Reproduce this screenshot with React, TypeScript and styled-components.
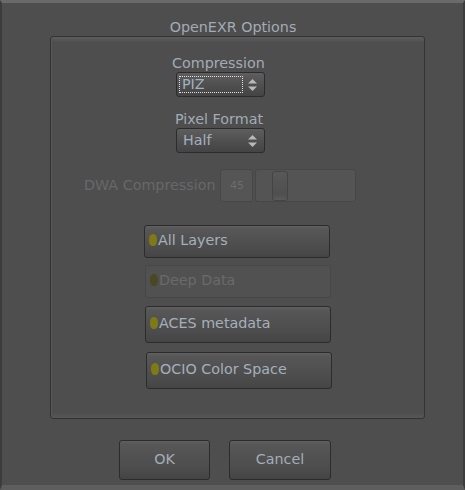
import React from "react";
import styled, { createGlobalStyle } from "styled-components";

const Global = createGlobalStyle`
  html, body { margin: 0; padding: 0; background: #4e4e4e; }
  body { font-family: "DejaVu Sans", "Liberation Sans", sans-serif; }
`;

const Window = styled.div`
  box-sizing: border-box;
  width: 465px;
  height: 490px;
  background: #4e4e4e;
  border-top: 3px solid #6a6a6a;
  border-left: 2px solid #3c3c3c;
  border-right: 2px solid #3c3c3c;
  border-bottom: 5px solid #5e5e5e;
  display: flex;
  flex-direction: column;
  align-items: flex-start;
`;

const Title = styled.div`
  align-self: stretch;
  text-align: center;
  color: #a3abb5;
  font-size: 14.3px;
  line-height: 17px;
  margin-top: 16px;
  padding-left: 1px;
`;

const Group = styled.div`
  box-sizing: border-box;
  margin-left: 48px;
  width: 375px;
  height: 383px;
  border: 1px solid #333;
  border-radius: 3px;
  background: linear-gradient(#5d5d5d 0px, #555 3px, #4e4e4e 5px, #4e4e4e calc(100% - 6px), #565656 100%);
  box-shadow: inset 1px 0 0 #575757;
  display: flex;
  flex-direction: column;
  align-items: flex-start;
  padding-top: 18px;
`;

const Label = styled.div<{ $left: number; $dim?: boolean; $top?: number }>`
  margin-left: ${(p) => p.$left}px;
  margin-top: ${(p) => p.$top ?? 0}px;
  color: ${(p) => (p.$dim ? "#686868" : "#a3abb5")};
  font-size: 14.3px;
  line-height: 17px;
  text-align: center;
`;

const Choice = styled.div<{ $left: number }>`
  box-sizing: border-box;
  margin-left: ${(p) => p.$left}px;
  width: 89px;
  height: 25px;
  border: 1px solid #2c2c2c;
  border-radius: 3px;
  background: linear-gradient(#5e5e5e, #4d4d4d 60%, #444);
  display: flex;
  align-items: center;
  padding-left: 3px;
  padding-right: 7px;
  color: #a3b0be;
  font-size: 14.3px;
`;

const ChoiceText = styled.span<{ $focus?: boolean }>`
  flex: 1;
  box-sizing: border-box;
  height: 15px;
  line-height: 14px;
  padding-left: ${(p) => (p.$focus ? 2 : 3)}px;
  outline: ${(p) => (p.$focus ? "1px dotted #e0e0e0" : "none")};
  margin-right: 6px;
`;

const Arrows = () => (
  <svg width="9" height="12" viewBox="0 0 9 12">
    <path d="M4.5 0 L9 4.5 L0 4.5 Z" fill="#b8b8b8" />
    <path d="M4.5 12 L9 7.5 L0 7.5 Z" fill="#b8b8b8" />
  </svg>
);

const DwaRow = styled.div`
  margin-top: 16px;
  margin-left: 33px;
  height: 33px;
  display: flex;
  align-items: center;
`;

const ValueBox = styled.div`
  box-sizing: border-box;
  width: 33px;
  height: 33px;
  margin-left: 5px;
  border: 1px solid #474747;
  border-radius: 3px;
  background: #555;
  color: #6c6c6c;
  font-size: 11px;
  display: flex;
  align-items: center;
  justify-content: center;
`;

const SliderTrack = styled.div`
  box-sizing: border-box;
  position: relative;
  width: 101px;
  height: 33px;
  margin-left: 2px;
  border: 1px solid #474747;
  border-radius: 3px;
  background: #545454;
`;

const SliderKnob = styled.div`
  box-sizing: border-box;
  position: absolute;
  left: 16px;
  top: 1px;
  width: 16px;
  height: 30px;
  border: 1px solid #444;
  border-radius: 3px;
  background: linear-gradient(#585858, #4f4f4f 80%, #5a5a5a);
`;

const Check = styled.div<{ $left: number; $top: number; $h: number; $dim?: boolean }>`
  box-sizing: border-box;
  margin-left: ${(p) => p.$left}px;
  margin-top: ${(p) => p.$top}px;
  width: 186px;
  height: ${(p) => p.$h}px;
  border: 1px solid ${(p) => (p.$dim ? "#474747" : "#2c2c2c")};
  border-radius: 3px;
  background: ${(p) =>
    p.$dim
      ? "#515151"
      : "linear-gradient(#606060 0px, #575757 3px, #4c4c4c 70%, #454545)"};
  display: flex;
  align-items: center;
  padding-left: 4px;
  padding-bottom: 3px;
  color: ${(p) => (p.$dim ? "#6a6a6a" : "#a5b0bc")};
  font-size: 14.3px;
  gap: 1px;
`;

const Dot = styled.span<{ $dim?: boolean }>`
  width: 8px;
  height: 12px;
  border-radius: 45%;
  background: ${(p) => (p.$dim ? "#4a4822" : "#7f7a16")};
  flex: none;
`;

const ButtonRow = styled.div`
  display: flex;
  margin-top: 21px;
  margin-left: 117px;
  gap: 19px;
`;

const Button = styled.div<{ $w: number }>`
  box-sizing: border-box;
  width: ${(p) => p.$w}px;
  height: 40px;
  border: 1px solid #2c2c2c;
  border-radius: 3px;
  background: linear-gradient(#606060 0px, #575757 3px, #4c4c4c 75%, #444);
  color: #a3adb8;
  font-size: 14.3px;
  display: flex;
  align-items: center;
  justify-content: center;
  padding-bottom: 2px;
`;

export default function App() {
  return (
    <>
      <Global />
      <Window>
        <Title>OpenEXR Options</Title>
        <Group>
          <Label $left={121}>Compression</Label>
          <Choice $left={125}>
            <ChoiceText $focus>PIZ</ChoiceText>
            <Arrows />
          </Choice>
          <Label $left={124} $top={14}>Pixel Format</Label>
          <Choice $left={125}>
            <ChoiceText>Half</ChoiceText>
            <Arrows />
          </Choice>
          <DwaRow>
            <Label $left={0} $dim>DWA Compression</Label>
            <ValueBox>45</ValueBox>
            <SliderTrack>
              <SliderKnob />
            </SliderTrack>
          </DwaRow>
          <Check $left={93} $top={23} $h={33}>
            <Dot />All Layers
          </Check>
          <Check $left={94} $top={7} $h={33} $dim>
            <Dot $dim />Deep Data
          </Check>
          <Check $left={94} $top={8} $h={37}>
            <Dot />ACES metadata
          </Check>
          <Check $left={95} $top={9} $h={37}>
            <Dot />OCIO Color Space
          </Check>
        </Group>
        <ButtonRow>
          <Button $w={91}>OK</Button>
          <Button $w={102}>Cancel</Button>
        </ButtonRow>
      </Window>
    </>
  );
}
